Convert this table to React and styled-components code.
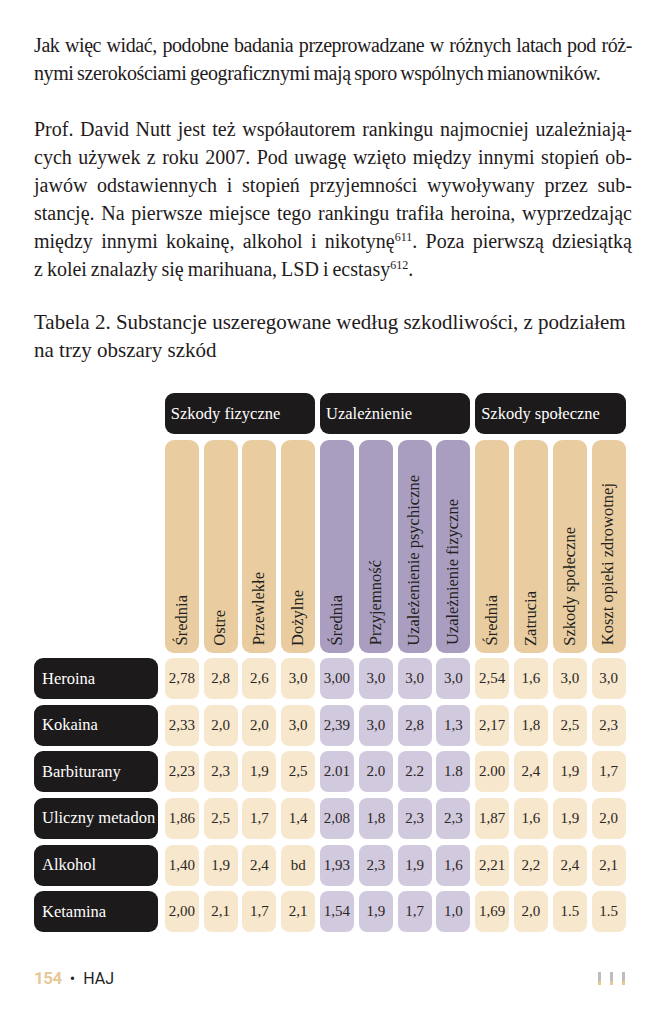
import styled, { createGlobalStyle } from "styled-components";

const GlobalStyle = createGlobalStyle`
  body {
    margin: 0;
    background: #ffffff;
  }
`;

const Page = styled.div`
  width: 667px;
  box-sizing: border-box;
  padding: 31px 35px 30px 34px;
  font-family: "Liberation Serif", serif;
  color: #1f1b1c;
`;

const Paragraph = styled.div`
  font-size: 20px;
  line-height: 28px;
  margin-bottom: ${(p) => p.$gap || 0}px;
  letter-spacing: ${(p) => (p.$tight ? "-0.4px" : "0")};
  word-spacing: -1px;
`;

const Line = styled.div`
  text-align: justify;
  text-align-last: ${(p) => (p.$last ? "left" : "justify")};
`;

const Sup = styled.sup`
  font-size: 12px;
  line-height: 0;
  vertical-align: 7px;
`;

const Caption = styled.div`
  font-size: 21px;
  line-height: 28px;
  margin-bottom: 29px;
`;

const Table = styled.div`
  display: grid;
  grid-template-columns: 126px repeat(12, 34px);
  grid-template-rows: 41px 213px repeat(6, 41px);
  column-gap: 4.8px;
  row-gap: 5.6px;
`;

const GroupHead = styled.div`
  grid-column: ${(p) => p.$start} / span 4;
  background: #1c1a1a;
  color: #ffffff;
  border-radius: 9px;
  display: flex;
  align-items: center;
  padding-left: 6px;
  font-size: 16.5px;
`;

const ColHead = styled.div`
  background: ${(p) => (p.$tone === "purple" ? "#a99ebf" : "#e9cda1")};
  border-radius: 9px;
  display: flex;
  justify-content: center;
  align-items: flex-end;
  padding-bottom: 7px;
  box-sizing: border-box;
`;

const Vert = styled.span`
  writing-mode: vertical-rl;
  transform: rotate(180deg);
  font-size: 16.5px;
  line-height: 1;
  white-space: nowrap;
  color: #231f20;
`;

const RowLabel = styled.div`
  grid-column: 1;
  width: 124px;
  box-sizing: border-box;
  background: #1c1a1a;
  color: #ffffff;
  border-radius: 9px;
  display: flex;
  align-items: center;
  padding-left: 8px;
  font-size: 16.5px;
  white-space: nowrap;
`;

const Cell = styled.div`
  background: ${(p) => (p.$tone === "purple" ? "#d1c9dd" : "#f7e7cc")};
  border-radius: 8px;
  display: flex;
  align-items: center;
  justify-content: center;
  font-size: 15px;
  color: #2b2626;
`;

const Spacer = styled.div``;

const Footer = styled.div`
  display: flex;
  align-items: center;
  justify-content: space-between;
  margin-top: 36px;
  padding-right: 7px;
  font-family: "Roboto", sans-serif;
`;

const FooterLeft = styled.div`
  display: flex;
  align-items: center;
  gap: 8px;
  font-size: 16px;
  color: #1f1f1f;
`;

const PageNum = styled.span`
  color: #e8c899;
  font-weight: 700;
  font-size: 17px;
  letter-spacing: -0.5px;
`;

const Bars = styled.div`
  display: flex;
  gap: 9px;
`;

const Bar = styled.span`
  width: 3px;
  height: 13px;
  background: linear-gradient(to bottom, #bdbdbd 0 70%, #e8c899 70% 100%);
`;

const columns = [
  { label: "Średnia", tone: "tan" },
  { label: "Ostre", tone: "tan" },
  { label: "Przewlekłe", tone: "tan" },
  { label: "Dożylne", tone: "tan" },
  { label: "Średnia", tone: "purple" },
  { label: "Przyjemność", tone: "purple" },
  { label: "Uzależenienie psychiczne", tone: "purple" },
  { label: "Uzależnienie fizyczne", tone: "purple" },
  { label: "Średnia", tone: "tan" },
  { label: "Zatrucia", tone: "tan" },
  { label: "Szkody społeczne", tone: "tan" },
  { label: "Koszt opieki zdrowotnej", tone: "tan" },
];

const rows = [
  ["Heroina", ["2,78", "2,8", "2,6", "3,0", "3,00", "3,0", "3,0", "3,0", "2,54", "1,6", "3,0", "3,0"]],
  ["Kokaina", ["2,33", "2,0", "2,0", "3,0", "2,39", "3,0", "2,8", "1,3", "2,17", "1,8", "2,5", "2,3"]],
  ["Barbiturany", ["2,23", "2,3", "1,9", "2,5", "2.01", "2.0", "2.2", "1.8", "2.00", "2,4", "1,9", "1,7"]],
  ["Uliczny metadon", ["1,86", "2,5", "1,7", "1,4", "2,08", "1,8", "2,3", "2,3", "1,87", "1,6", "1,9", "2,0"]],
  ["Alkohol", ["1,40", "1,9", "2,4", "bd", "1,93", "2,3", "1,9", "1,6", "2,21", "2,2", "2,4", "2,1"]],
  ["Ketamina", ["2,00", "2,1", "1,7", "2,1", "1,54", "1,9", "1,7", "1,0", "1,69", "2,0", "1.5", "1.5"]],
];

const App = () => {
  return (
    <Page>
      <GlobalStyle />
      <Paragraph $gap={28} $tight>
        <Line>Jak więc widać, podobne badania przeprowadzane w różnych latach pod róż-</Line>
        <Line $last>nymi szerokościami geograficznymi mają sporo wspólnych mianowników.</Line>
      </Paragraph>

      <Paragraph $gap={25}>
        <Line>Prof. David Nutt jest też współautorem rankingu najmocniej uzależniają-</Line>
        <Line>cych używek z roku 2007. Pod uwagę wzięto między innymi stopień ob-</Line>
        <Line>jawów odstawiennych i stopień przyjemności wywoływany przez sub-</Line>
        <Line>stancję. Na pierwsze miejsce tego rankingu trafiła heroina, wyprzedzając</Line>
        <Line>
          między innymi kokainę, alkohol i nikotynę<Sup>611</Sup>. Poza pierwszą dziesiątką
        </Line>
        <Line $last>
          z kolei znalazły się marihuana, LSD i ecstasy<Sup>612</Sup>.
        </Line>
      </Paragraph>

      <Caption>
        Tabela 2. Substancje uszeregowane według szkodliwości, z podziałem
        <br />
        na trzy obszary szkód
      </Caption>

      <Table>
        <Spacer />
        <GroupHead $start={2}>Szkody fizyczne</GroupHead>
        <GroupHead $start={6}>Uzależnienie</GroupHead>
        <GroupHead $start={10}>Szkody społeczne</GroupHead>

        <Spacer />
        {columns.map((c, i) => (
          <ColHead key={i} $tone={c.tone}>
            <Vert>{c.label}</Vert>
          </ColHead>
        ))}

        {rows.map(([name, values]) => [
          <RowLabel key={name}>{name}</RowLabel>,
          ...values.map((v, i) => (
            <Cell key={name + i} $tone={columns[i].tone}>
              {v}
            </Cell>
          )),
        ])}
      </Table>

      <Footer>
        <FooterLeft>
          <PageNum>154</PageNum>
          <span>•</span>
          <span>HAJ</span>
        </FooterLeft>
        <Bars>
          <Bar />
          <Bar />
          <Bar />
        </Bars>
      </Footer>
    </Page>
  );
};

export default App;
